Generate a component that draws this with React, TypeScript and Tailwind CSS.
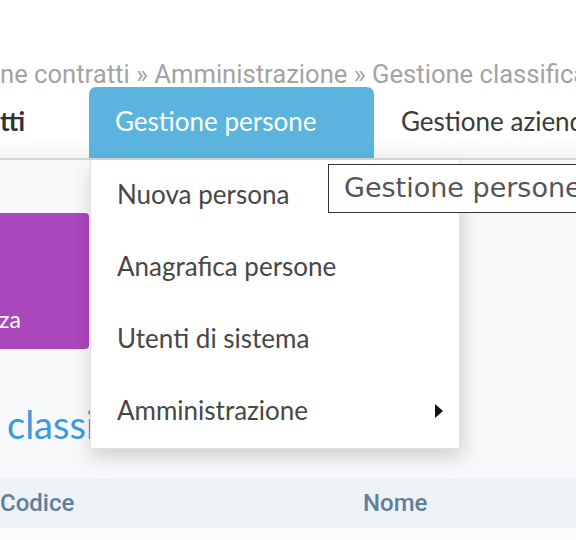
import React from 'react';

const MENU_ITEMS = ['Nuova persona', 'Anagrafica persone', 'Utenti di sistema', 'Amministrazione'];

export default function App() {
  return (
    <div className="w-[576px] h-[540px] overflow-hidden bg-white relative font-['Lato','Liberation_Sans',sans-serif]">
      {/* breadcrumb */}
      <div className="h-[87px] flex items-end whitespace-nowrap">
        <p className="text-[25.6px] leading-[30px] mb-[-2px] text-[#a3a3a3] font-['Roboto','Liberation_Sans',sans-serif]">
          ne contratti » Amministrazione » Gestione classificazioni
        </p>
      </div>

      {/* main nav */}
      <div className="h-[73px] flex items-stretch border-b-2 border-[#d6d6d6] bg-gradient-to-b from-white from-70% to-[#f4f4f4] whitespace-nowrap">
        <div className="w-[89px] shrink-0 flex items-center pb-[3px] text-[26px] font-bold text-[#333]">tti</div>
        <div className="w-[285px] shrink-0 bg-[#5ab4de] rounded-t-[7px] flex items-center pb-[3px] px-[26px] text-[26px] text-white">
          Gestione persone
        </div>
        <div className="shrink-0 flex items-center pb-[3px] pl-[27px] text-[26px] text-[#3a3a3a]">Gestione aziende</div>
      </div>

      {/* page content */}
      <div className="relative bg-[#f7f8fa] h-[380px]">
        <div className="pt-[53px]">
          <div className="w-[89px] h-[136px] bg-[#ab47bc] rounded-r-[4px] flex items-end pb-[18px]">
            <span className="text-[23px] text-white leading-none ml-[-1px]">za</span>
          </div>
          <h1 className="mt-[52px] ml-[7px] w-[83px] overflow-hidden text-[38px] leading-[46px] text-[#3b9ad9] whitespace-nowrap">
            classificazioni
          </h1>
          <div className="mt-[31px] h-[50px] bg-[#eef2f7] flex items-center text-[24px] font-medium text-[#5f7f99] font-['Roboto','Liberation_Sans',sans-serif]">
            <span className="w-[363px]">Codice</span>
            <span>Nome</span>
          </div>
          <div className="h-[20px] bg-[#fbfcfd]" />
        </div>

        {/* dropdown menu */}
        <div className="absolute left-[90px] top-0 w-[370px] bg-white border border-[#e2e2e2] border-t-0 shadow-[2px_8px_18px_rgba(0,0,0,0.16)]">
          {MENU_ITEMS.map((item, i) => (
            <div key={item} className="h-[72px] flex items-center justify-between pl-[26px] pr-[16px] pb-[3px] text-[26px] text-[#474747]">
              <span>{item}</span>
              {i === MENU_ITEMS.length - 1 && (
                <svg width="8" height="14" viewBox="0 0 8 14">
                  <path d="M0 0 L8 7 L0 14 Z" fill="#111" />
                </svg>
              )}
            </div>
          ))}
        </div>

        {/* tooltip */}
        <div className="absolute left-[328px] top-[4px] h-[49px] pl-[15px] pr-[10px] bg-white border-[1.5px] border-[#333] flex items-center whitespace-nowrap text-[27px] text-[#555] font-['DejaVu_Sans',sans-serif]">
          Gestione persone
        </div>
      </div>
    </div>
  );
}
